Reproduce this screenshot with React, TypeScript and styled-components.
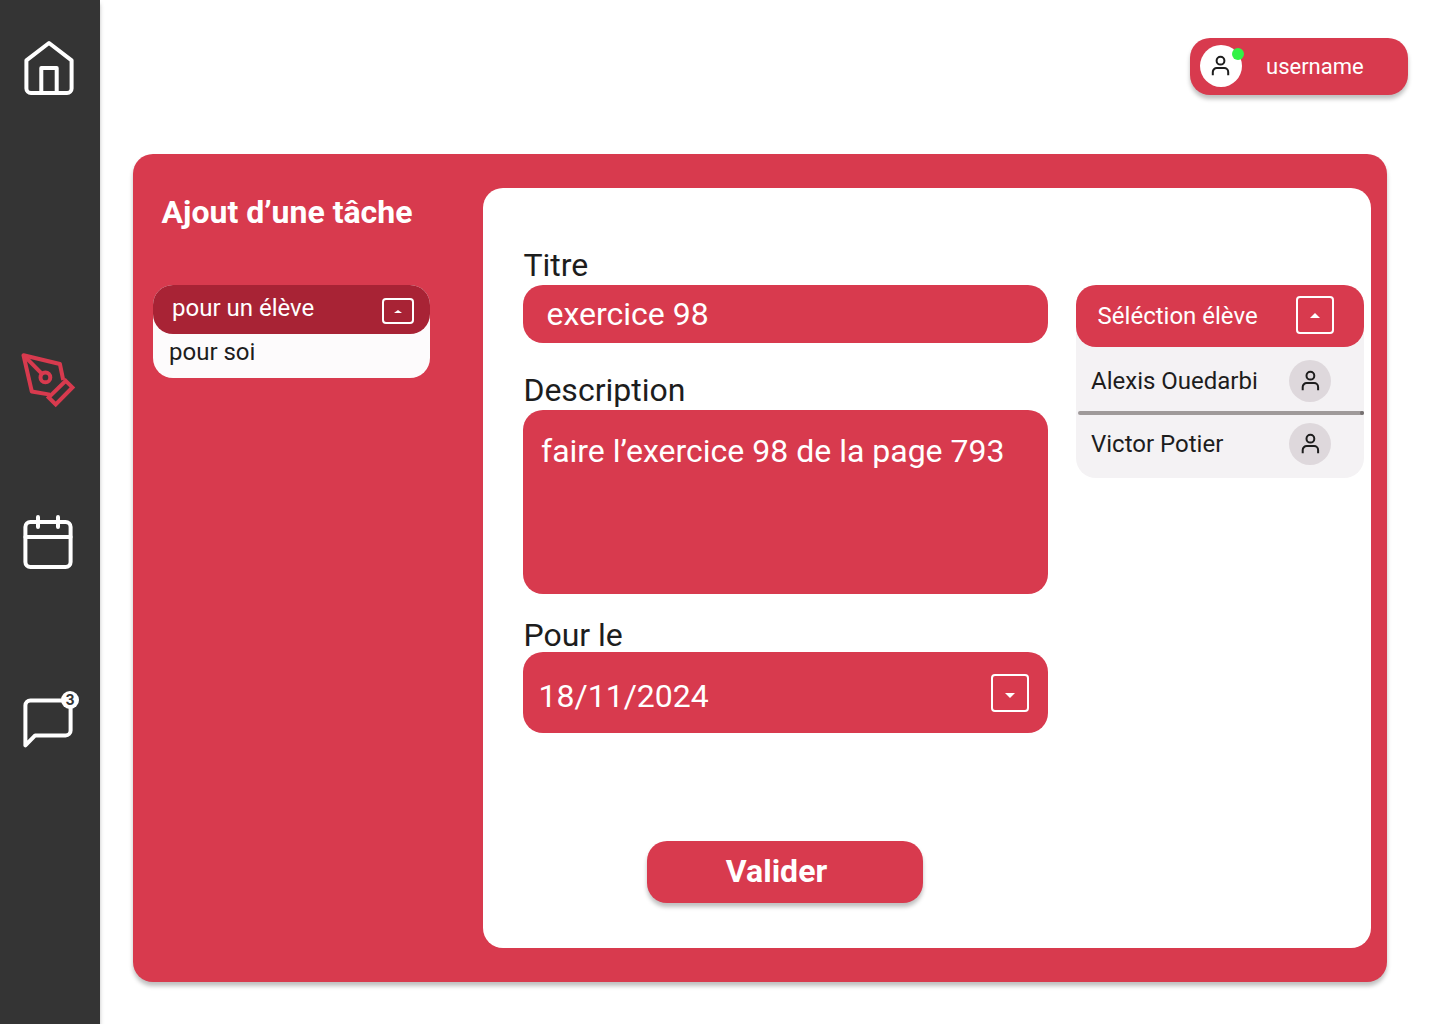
import React from "react";
import styled, { createGlobalStyle } from "styled-components";

const red = "#d83a4e";
const ink = "#1d1d1d";

const GlobalStyle = createGlobalStyle`
  *, *::before, *::after { box-sizing: border-box; }
  body { margin: 0; background: #fff; font-family: Roboto, "Liberation Sans", sans-serif; }
  button { font: inherit; border: 0; padding: 0; cursor: pointer; }
`;

const Page = styled.div`
  display: flex;
  width: 1440px;
  height: 1024px;
  overflow: hidden;
  background: #fff;
`;

const Sidebar = styled.nav`
  display: flex;
  flex-direction: column;
  align-items: flex-start;
  width: 100px;
  flex: none;
  padding: 36px 0 0 18px;
  background: #343434;
  box-shadow: 0 4px 4px rgba(0, 0, 0, 0.25);
`;

const NavItem = styled.a<{ $gap?: number; $color?: string }>`
  position: relative;
  display: block;
  width: 62px;
  height: 62px;
  margin-top: ${(p) => p.$gap ?? 0}px;
  color: ${(p) => p.$color ?? "#fff"};
`;

const Icon = styled.svg`
  display: block;
  fill: none;
  stroke: currentColor;
`;

const Badge = styled.span`
  position: absolute;
  top: 5px;
  left: 43px;
  width: 18px;
  height: 18px;
  border-radius: 50%;
  background: #fff;
  color: #343434;
  font: 700 14px/18px Inter, sans-serif;
  text-align: center;
`;

const Main = styled.main`
  display: flex;
  flex-direction: column;
  flex: 1;
  padding: 38px 32px 0 33px;
`;

const UserChip = styled.div`
  display: flex;
  align-items: center;
  align-self: flex-end;
  width: 218px;
  height: 57px;
  padding: 0 0 1px 10px;
  gap: 24px;
  border-radius: 20px;
  background: ${red};
  box-shadow: 0 4px 4px rgba(0, 0, 0, 0.25);
  color: #fff;
  font-size: 22px;
  line-height: 28px;
`;

const UserName = styled.span`
  padding-top: 2px;
`;

const Avatar = styled.span<{ $tone: string }>`
  position: relative;
  display: flex;
  flex: none;
  width: 42px;
  height: 42px;
  border-radius: 50%;
  background: ${(p) => p.$tone};
  color: ${ink};
`;

const OnlineDot = styled.i`
  position: absolute;
  top: 3px;
  left: 32px;
  width: 12px;
  height: 12px;
  border-radius: 50%;
  background: #32f246;
`;

const Board = styled.section`
  display: flex;
  justify-content: space-between;
  width: 1254px;
  height: 828px;
  margin-top: 59px;
  padding: 34px 16px 34px 20px;
  border-radius: 20px;
  background: ${red};
  box-shadow: 0 4px 4px rgba(0, 0, 0, 0.25);
`;

const TaskColumn = styled.div`
  width: 277px;
`;

const Title = styled.h1`
  margin: 4px 0 0 8.6px;
  color: #fff;
  font-size: 32px;
  font-weight: 700;
  line-height: 40px;
  white-space: nowrap;
`;

const AudienceMenu = styled.div`
  height: 93px;
  margin-top: 53px;
  border-radius: 20px;
  background: #fdfbfc;
  color: ${ink};
  font-size: 24px;
  line-height: 32px;
`;

const AudienceCurrent = styled.div`
  display: flex;
  align-items: flex-start;
  justify-content: space-between;
  height: 49px;
  padding: 7px 16px 0 19px;
  border-radius: 20px;
  background: #a82335;
  color: #fff;
`;

const AudienceOption = styled.div`
  padding: 2px 0 0 16px;
`;

const Toggle = styled.button<{ $w: number; $h: number; $top?: number }>`
  display: flex;
  flex: none;
  align-items: center;
  justify-content: center;
  width: ${(p) => p.$w}px;
  height: ${(p) => p.$h}px;
  margin-top: ${(p) => p.$top ?? 0}px;
  border: 2px solid #fff;
  border-radius: 4px;
  background: transparent;
  color: #fff;
`;

const Sheet = styled.div`
  display: flex;
  align-items: flex-start;
  width: 888px;
  height: 760px;
  padding: 57px 7px 0 40px;
  border-radius: 20px;
  background: #fff;
`;

const Form = styled.form`
  display: flex;
  flex-direction: column;
  width: 525px;
`;

const Label = styled.label<{ $gap?: number; $h?: number }>`
  height: ${(p) => p.$h ?? 40}px;
  margin-top: ${(p) => p.$gap ?? 0}px;
  padding-left: 0.4px;
  color: ${ink};
  font-size: 32px;
  line-height: 40px;
`;

const Field = styled.div<{ $h: number; $pad: string }>`
  display: flex;
  align-items: flex-start;
  justify-content: space-between;
  height: ${(p) => p.$h}px;
  padding: ${(p) => p.$pad};
  border-radius: 20px;
  background: ${red};
  color: #fff;
  font-size: 32px;
  line-height: 40px;
`;

const Submit = styled.button`
  width: 276px;
  height: 62px;
  margin: 108px 0 0 124px;
  padding: 0 17px 2px 0 !important;
  border-radius: 20px;
  background: ${red};
  box-shadow: 0 4px 4px rgba(0, 0, 0, 0.25);
  color: #fff;
  font-size: 32px !important;
  font-weight: 700 !important;
`;

const StudentPicker = styled.div`
  width: 288px;
  height: 193px;
  margin: 40px 0 0 28px;
  border-radius: 20px;
  background: #f4f2f4;
  color: ${ink};
  font-size: 24px;
  line-height: 32px;
`;

const PickerHead = styled.div`
  display: flex;
  justify-content: space-between;
  height: 62px;
  padding: 11px 30px 0 21.6px;
  border-radius: 20px;
  background: ${red};
  color: #fff;
`;

const PickerLabel = styled.span`
  margin-top: 4px;
`;

const Student = styled.div<{ $gap: number }>`
  display: flex;
  align-items: center;
  justify-content: space-between;
  height: 42px;
  margin-top: ${(p) => p.$gap}px;
  padding: 0 33px 0 15px;
`;

const Divider = styled.div`
  display: flex;
  justify-content: flex-end;
  height: 4px;
  margin: 9px 0 0 2px;
  border-radius: 2px;
  background: #9f9a9a;

  &::after {
    content: "";
    width: 4px;
    height: 4px;
    border-radius: 50%;
    background: #767171;
  }
`;

const HomeIcon = () => (
  <Icon width="62" height="62" viewBox="18 36 62 62" strokeWidth="4" strokeLinejoin="round">
    <path d="M26.4 60.3 49 43l22.6 17.3v28.2a4.5 4.5 0 0 1-4.5 4.5H30.9a4.5 4.5 0 0 1-4.5-4.5Z" />
    <path d="M41.3 93V68h15.4v25" />
  </Icon>
);

const PenIcon = () => (
  <Icon width="62" height="62" viewBox="18 349 62 62" strokeWidth="4" strokeLinejoin="round">
    <path d="M63.2 380 59.9 364 23.5 355.2 31.8 391.5 50 394.6" />
    <path d="m23.5 355.2 18 18.2" />
    <circle cx="45.4" cy="377.4" r="4.9" />
    <path d="m65.7 380.8 6.7 6.6-16.7 16.9-7-6.9Z" strokeLinejoin="miter" />
  </Icon>
);

const CalendarIcon = () => (
  <Icon width="62" height="62" viewBox="18 511 62 62" strokeWidth="4" strokeLinecap="round">
    <rect x="25.4" y="522" width="45.2" height="45" rx="5" />
    <path d="M25.4 537h45.2M38 517v10M58 517v10" />
  </Icon>
);

const MessageIcon = () => (
  <Icon width="62" height="62" viewBox="18 686 62 62" strokeWidth="4" strokeLinejoin="round">
    <path d="M30.4 700.4h35.2a5 5 0 0 1 5 5v25a5 5 0 0 1-5 5H35.2l-9.8 10v-40a5 5 0 0 1 5-5Z" />
  </Icon>
);

const UserIcon = ({ x = 0 }: { x?: number }) => (
  <Icon width="42" height="42" viewBox={`${-x} 0 42 42`} strokeWidth="2">
    <circle cx="20.5" cy="15.7" r="3.9" />
    <path d="M12.8 30.2V27a4 4 0 0 1 4-4h7.4a4 4 0 0 1 4 4v3.2" />
  </Icon>
);

const Caret = ({ w = 10, h = 5, shift = 0, down = false }: { w?: number; h?: number; shift?: number; down?: boolean }) => (
  <svg width={w} height={h + shift * 2} viewBox={`0 ${-shift * 2} ${w} ${h + shift * 2}`} fill="currentColor">
    <path d={down ? `M0 0h${w}L${w / 2} ${h}Z` : `M0 ${h}h${w}L${w / 2} 0Z`} />
  </svg>
);

export default function App() {
  return (
    <>
      <GlobalStyle />
      <Page>
        <Sidebar>
          <NavItem><HomeIcon /></NavItem>
          <NavItem $gap={251} $color={red}><PenIcon /></NavItem>
          <NavItem $gap={100}><CalendarIcon /></NavItem>
          <NavItem $gap={113}>
            <MessageIcon />
            <Badge>3</Badge>
          </NavItem>
        </Sidebar>
        <Main>
          <UserChip>
            <Avatar $tone="#fff">
              <UserIcon />
              <OnlineDot />
            </Avatar>
            <UserName>username</UserName>
          </UserChip>
          <Board>
            <TaskColumn>
              <Title>Ajout d’une tâche</Title>
              <AudienceMenu>
                <AudienceCurrent>
                  <span>pour un élève</span>
                  <Toggle type="button" $w={32} $h={26} $top={6}><Caret w={8} h={3} shift={0.5} /></Toggle>
                </AudienceCurrent>
                <AudienceOption>pour soi</AudienceOption>
              </AudienceMenu>
            </TaskColumn>
            <Sheet>
              <Form>
                <Label>Titre</Label>
                <Field $h={58} $pad="9px 23.5px">exercice 98</Field>
                <Label $gap={27}>Description</Label>
                <Field $h={184} $pad="21px 18px">faire l’exercice 98 de la page 793</Field>
                <Label $gap={21} $h={37}>Pour le</Label>
                <Field $h={81} $pad="24px 19px 0 15.5px">
                  <span>18/11/2024</span>
                  <Toggle type="button" $w={38} $h={38} $top={-2}><Caret shift={2} down /></Toggle>
                </Field>
                <Submit type="button">Valider</Submit>
              </Form>
              <StudentPicker>
                <PickerHead>
                  <PickerLabel>Séléction élève</PickerLabel>
                  <Toggle type="button" $w={38} $h={38}><Caret /></Toggle>
                </PickerHead>
                <Student $gap={13}>
                  <span>Alexis Ouedarbi</span>
                  <Avatar $tone="#ded8dc"><UserIcon x={0.9} /></Avatar>
                </Student>
                <Divider />
                <Student $gap={8}>
                  <span>Victor Potier</span>
                  <Avatar $tone="#ded8dc"><UserIcon x={0.9} /></Avatar>
                </Student>
              </StudentPicker>
            </Sheet>
          </Board>
        </Main>
      </Page>
    </>
  );
}
